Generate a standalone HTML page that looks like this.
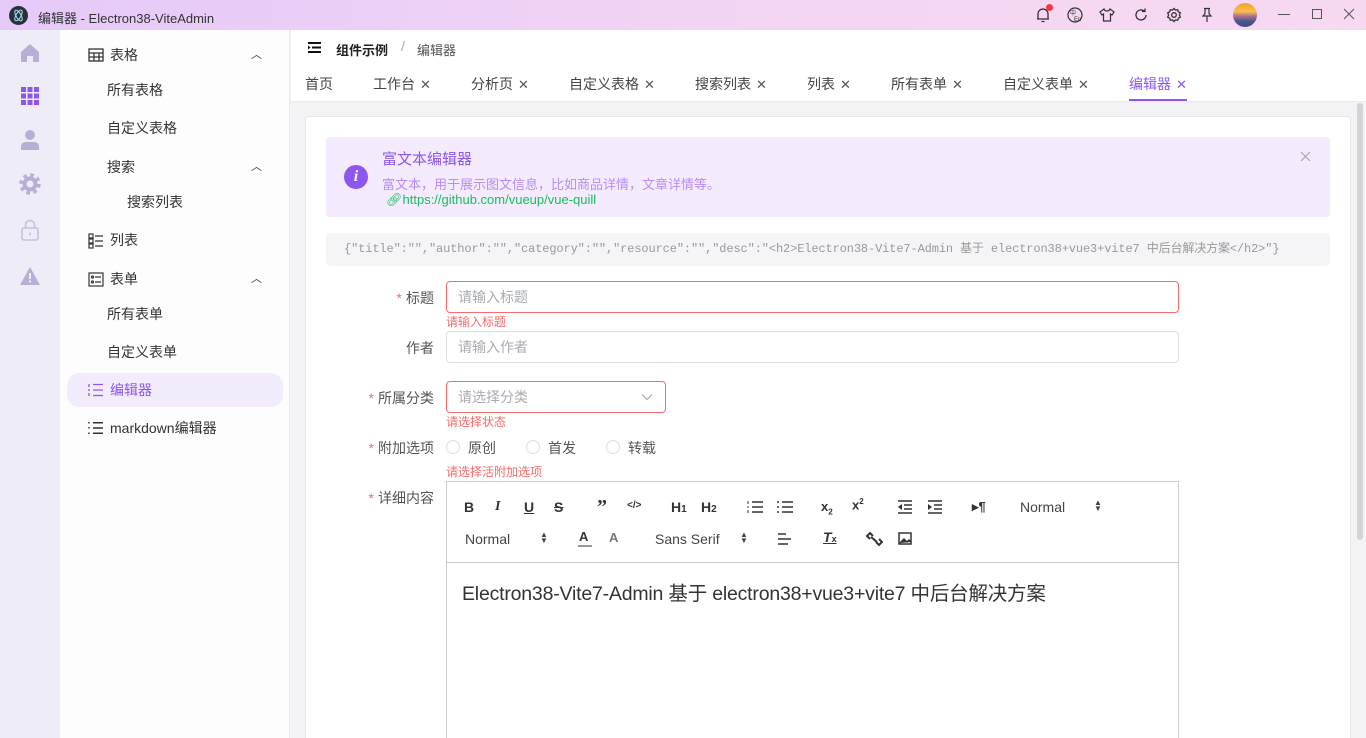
<!DOCTYPE html>
<html style="width:1366px;height:738px;overflow:hidden"><head><meta charset="utf-8"><style>
*{box-sizing:border-box;margin:0;padding:0}
body{width:1366px;height:738px;overflow:hidden;font-family:"Liberation Sans","Noto Sans CJK SC",sans-serif;font-size:14px;color:#333;background:#f3f3f6;position:relative}
.abs{position:absolute}
.title{left:0;top:0;width:1366px;height:30px;background:linear-gradient(90deg,#e5c9f9,#f4d6f3 60%,#f7d9f2)}
.rail{left:0;top:30px;width:60px;height:708px;background:#eeecf7}
.side{left:60px;top:30px;width:230px;height:708px;background:#fdfdfe;border-right:1px solid #e8e8ee}
.mi{position:absolute;left:0;width:230px;height:34px;line-height:34px;color:#333;font-size:14px}
.hdr{left:291px;top:30px;width:1075px;height:36px;background:#fff}
.tabs{left:291px;top:66px;width:1075px;height:36px;background:#fff;border-bottom:1px solid #ececf0}
.tab{position:absolute;top:0;line-height:36px;color:#444;font-size:14px}
.tab i{font-style:normal;color:#555;font-size:13px;margin-left:5px}
.card{left:305px;top:116px;width:1046px;height:622px;background:#fff;border:1px solid #e6e6ee;border-bottom:none;border-radius:4px 4px 0 0}
.lbl{position:absolute;right:932px;font-size:14px;color:#555;text-align:right}
.lbl b{color:#f56c6c;font-weight:normal;margin-right:4px}
.inp{position:absolute;left:446px;height:32px;border:1px solid #dcdfe6;border-radius:4px;padding-left:11px;line-height:30px;color:#a8abb2;font-size:14px;background:#fff}
.err{border-color:#f56c6c}
.em{position:absolute;left:446px;font-size:12px;color:#f56c6c}
.tb{position:absolute;font-size:13px;color:#333;font-weight:bold;white-space:nowrap}
</style></head><body>
<div class="abs title">
  <div class="abs" style="left:9px;top:6px;width:19px;height:19px;border-radius:50%;background:#2b2f3a"><svg width="19" height="19" viewBox="0 0 19 19"><g fill="none" stroke="#9fe3f2" stroke-width="1"><ellipse cx="9.5" cy="9.5" rx="6" ry="2.5" transform="rotate(60 9.5 9.5)"/><ellipse cx="9.5" cy="9.5" rx="6" ry="2.5" transform="rotate(-60 9.5 9.5)"/></g></svg></div>
  <div class="abs" style="left:38px;top:8px;font-size:13px;color:#333">编辑器 - Electron38-ViteAdmin</div>
  <svg class="abs" style="left:1034px;top:6px" width="18" height="18" viewBox="0 0 18 18" fill="none" stroke="#333" stroke-width="1.3"><path d="M4 13V8a5 5 0 0 1 10 0v5zM3 13h12M7.5 15.5h3"/></svg>
  <div class="abs" style="left:1046px;top:4px;width:7px;height:7px;border-radius:50%;background:#f5363d"></div>
  <svg class="abs" style="left:1066px;top:6px" width="18" height="18" viewBox="0 0 18 18" fill="none" stroke="#333" stroke-width="1.2"><circle cx="9" cy="9" r="7"/><text x="4" y="9" font-size="6" fill="#333" stroke="none">中</text><text x="8" y="15" font-size="6" fill="#333" stroke="none">En</text></svg>
  <svg class="abs" style="left:1098px;top:6px" width="18" height="18" viewBox="0 0 18 18" fill="none" stroke="#333" stroke-width="1.2"><path d="M6 3L2 6l2 3 1.5-1V15h7V8L14 9l2-3-4-3c-.5 1.5-1.5 2-3 2S6.5 4.5 6 3z"/></svg>
  <svg class="abs" style="left:1132px;top:6px" width="18" height="18" viewBox="0 0 18 18" fill="none" stroke="#333" stroke-width="1.3"><path d="M14 9a5 5 0 1 1-1.5-3.6M13 2.5v3h-3"/></svg>
  <svg class="abs" style="left:1165px;top:6px" width="18" height="18" viewBox="0 0 18 18" fill="none" stroke="#333" stroke-width="1.3"><circle cx="9" cy="9" r="2.3"/><path d="M9 2.5l1.5 1.6 2.2-.4.6 2.1 2 1-.9 2.2.9 2.2-2 1-.6 2.1-2.2-.4L9 15.5l-1.5-1.6-2.2.4-.6-2.1-2-1 .9-2.2-.9-2.2 2-1 .6-2.1 2.2.4z"/></svg>
  <svg class="abs" style="left:1198px;top:6px" width="18" height="18" viewBox="0 0 18 18" fill="none" stroke="#333" stroke-width="1.2"><path d="M6 2.5h6M7 2.5v5L5 10h8l-2-2.5v-5M9 10v6"/></svg>
  <div class="abs" style="left:1233px;top:3px;width:24px;height:24px;border-radius:50%;background:linear-gradient(180deg,#f0a12e 0%,#f9c04a 35%,#b0708a 55%,#4a5a8e 75%,#3e4d7e 100%)"></div>
  <div class="abs" style="left:1278px;top:14px;width:12px;height:1px;background:#555"></div>
  <div class="abs" style="left:1312px;top:9px;width:10px;height:10px;border:1px solid #555"></div>
  <svg class="abs" style="left:1343px;top:8px" width="12" height="12" viewBox="0 0 12 12" stroke="#555" stroke-width="1"><path d="M1 1l10 10M11 1L1 11"/></svg>
</div>

<div class="abs rail">
  <svg class="abs" style="left:20px;top:13px" width="20" height="19" viewBox="0 0 20 19" fill="#b9afd6"><path d="M10 1L1 9v10h6v-6h6v6h6V9z"/></svg>
  <svg class="abs" style="left:21px;top:57px" width="18" height="18" viewBox="0 0 18 18" fill="#8d57ef"><rect x="0" y="0" width="5" height="5"/><rect x="6.5" y="0" width="5" height="5"/><rect x="13" y="0" width="5" height="5"/><rect x="0" y="6.5" width="5" height="5"/><rect x="6.5" y="6.5" width="5" height="5"/><rect x="13" y="6.5" width="5" height="5"/><rect x="0" y="13" width="5" height="5"/><rect x="6.5" y="13" width="5" height="5"/><rect x="13" y="13" width="5" height="5"/></svg>
  <svg class="abs" style="left:20px;top:99px" width="20" height="21" viewBox="0 0 20 21" fill="#b9afd6"><circle cx="10" cy="6" r="5"/><path d="M1 21v-4c0-2 2-4 5-4h8c3 0 5 2 5 4v4z"/></svg>
  <svg class="abs" style="left:19px;top:143px" width="22" height="22" viewBox="0 0 22 22" fill="none" stroke="#b9afd6"><circle cx="11" cy="11" r="9" stroke-width="3.5" stroke-dasharray="3.5 3.57"/><circle cx="11" cy="11" r="5.5" stroke-width="4"/></svg>
  <svg class="abs" style="left:20px;top:189px" width="20" height="22" viewBox="0 0 20 22" fill="none" stroke="#c9c0e0" stroke-width="1.6"><rect x="2" y="9" width="16" height="12" rx="2"/><path d="M5.5 9V6a4.5 4.5 0 0 1 9 0v3M10 13.5v3"/></svg>
  <svg class="abs" style="left:20px;top:237px" width="20" height="18" viewBox="0 0 20 18" fill="#b9afd6"><path d="M10 0L0 18h20z"/><rect x="9" y="6" width="2" height="6" fill="#eeecf7"/><rect x="9" y="13.5" width="2" height="2" fill="#eeecf7"/></svg>
</div>

<div class="abs side">
  <div class="mi" style="top:8px"><svg class="abs" style="left:28px;top:10px" width="16" height="14" viewBox="0 0 16 14" fill="none" stroke="#333" stroke-width="1.3"><rect x="1" y="1" width="14" height="12"/><path d="M1 5h14M1 9h14M6 5v8M11 5v8"/></svg><span style="margin-left:50px">表格</span><span class="abs" style="right:28px;top:0;font-size:11px">︿</span></div>
  <div class="mi" style="top:43px;padding-left:47px">所有表格</div>
  <div class="mi" style="top:81px;padding-left:47px">自定义表格</div>
  <div class="mi" style="top:120px;padding-left:47px">搜索<span class="abs" style="right:28px;top:0;font-size:11px">︿</span></div>
  <div class="mi" style="top:155px;padding-left:67px">搜索列表</div>
  <div class="mi" style="top:193px"><svg class="abs" style="left:28px;top:10px" width="16" height="16" viewBox="0 0 16 16" fill="none" stroke="#333" stroke-width="1.2"><rect x="1" y="1" width="4" height="4"/><rect x="1" y="6" width="4" height="4"/><rect x="1" y="11" width="4" height="4"/><path d="M7 3h8M7 8h8M7 13h8"/></svg><span style="margin-left:50px">列表</span></div>
  <div class="mi" style="top:232px"><svg class="abs" style="left:28px;top:10px" width="16" height="15" viewBox="0 0 16 15" fill="none" stroke="#333" stroke-width="1.2"><rect x="1" y="1" width="14" height="13"/><circle cx="4.5" cy="5" r="1"/><circle cx="4.5" cy="10" r="1"/><path d="M7 5h6M7 10h6"/></svg><span style="margin-left:50px">表单</span><span class="abs" style="right:28px;top:0;font-size:11px">︿</span></div>
  <div class="mi" style="top:267px;padding-left:47px">所有表单</div>
  <div class="mi" style="top:305px;padding-left:47px">自定义表单</div>
  <div class="abs" style="left:7px;top:343px;width:216px;height:34px;border-radius:12px;background:#f2ecfd"></div>
  <div class="mi" style="top:343px;color:#8d57ef"><svg class="abs" style="left:28px;top:10px" width="16" height="14" viewBox="0 0 16 14" fill="none" stroke="#8d57ef" stroke-width="1.3"><path d="M1 1v3M1 6v2M1 10v3M5 1.5h10M5 7h10M5 12.5h10"/></svg><span style="margin-left:50px">编辑器</span></div>
  <div class="mi" style="top:381px"><svg class="abs" style="left:28px;top:10px" width="16" height="14" viewBox="0 0 16 14" fill="none" stroke="#333" stroke-width="1.5"><path d="M1 1v1.5M1 6v1.5M1 11.5v1.5M5 1.7h10M5 7h10M5 12.3h10"/></svg><span style="margin-left:50px">markdown编辑器</span></div>
</div>

<div class="abs hdr">
  <svg class="abs" style="left:17px;top:12px" width="13" height="11" viewBox="0 0 13 11" fill="#111"><rect x="0" y="0" width="13" height="2"/><rect x="4" y="4.5" width="9" height="2"/><rect x="0" y="9" width="13" height="2"/><path d="M0 3.5l2.5 2-2.5 2z"/></svg>
  <div class="abs" style="left:45px;top:10px;font-size:13px;font-weight:bold;color:#222">组件示例</div>
  <div class="abs" style="left:110px;top:8px;font-size:14px;color:#aaa">/</div>
  <div class="abs" style="left:126px;top:10px;font-size:13px;color:#555">编辑器</div>
</div>
<div class="abs tabs">
  <div class="tab" style="left:14px">首页</div>
  <div class="tab" style="left:82px">工作台<i>✕</i></div>
  <div class="tab" style="left:180px">分析页<i>✕</i></div>
  <div class="tab" style="left:278px">自定义表格<i>✕</i></div>
  <div class="tab" style="left:404px">搜索列表<i>✕</i></div>
  <div class="tab" style="left:516px">列表<i>✕</i></div>
  <div class="tab" style="left:600px">所有表单<i>✕</i></div>
  <div class="tab" style="left:712px">自定义表单<i>✕</i></div>
  <div class="tab" style="left:838px;color:#8d57ef">编辑器<i style="color:#8d57ef">✕</i></div>
  <div class="abs" style="left:838px;top:33px;width:58px;height:2px;background:#8d57ef"></div>
</div>
<div class="abs" style="left:1357px;top:103px;width:6px;height:437px;border-radius:3px;background:#d4d4d8"></div>

<div class="abs card"></div>
<div class="abs" style="left:326px;top:137px;width:1004px;height:80px;background:#f4ebfe;border-radius:4px">
  <div class="abs" style="left:18px;top:28px;width:24px;height:24px;border-radius:50%;background:#8d57ef;color:#fff;text-align:center;font:italic bold 16px/24px 'Liberation Serif',serif">i</div>
  <div class="abs" style="left:56px;top:11px;font-size:15px;color:#8d57ef">富文本编辑器</div>
  <div class="abs" style="left:56px;top:37px;font-size:13px;color:#b88df6;font-family:'Noto Sans CJK SC',sans-serif">富文本，用于展示图文信息，比如商品详情，文章详情等。</div>
  <div class="abs" style="left:60px;top:55px;font-size:13px;color:#13c25a">🔗︎https://github.com/vueup/vue-quill</div>
  <svg class="abs" style="left:974px;top:14px" width="11" height="11" viewBox="0 0 11 11" stroke="#a8a8b0" stroke-width="1.2"><path d="M1 1l9 9M10 1L1 10"/></svg>
</div>
<div class="abs" style="left:326px;top:233px;width:1004px;height:33px;background:#f5f5f7;border-radius:4px;padding-left:18px;line-height:33px;font-family:'Liberation Mono','Noto Sans CJK SC',monospace;font-size:12px;color:#999;white-space:nowrap;letter-spacing:-0.12px">{"title":"","author":"","category":"","resource":"","desc":"&lt;h2&gt;Electron38-Vite7-Admin 基于 electron38+vue3+vite7 中后台解决方案&lt;/h2&gt;"}</div>

<div class="lbl" style="top:288px"><b>*</b>标题</div>
<div class="inp err" style="top:281px;width:733px">请输入标题</div>
<div class="em" style="top:313px">请输入标题</div>
<div class="lbl" style="top:338px">作者</div>
<div class="inp" style="top:331px;width:733px">请输入作者</div>
<div class="lbl" style="top:388px"><b>*</b>所属分类</div>
<div class="inp err" style="top:381px;width:220px">请选择分类<svg class="abs" style="left:194px;top:11px" width="12" height="8" viewBox="0 0 12 8" fill="none" stroke="#a8abb2" stroke-width="1.2"><path d="M1 1.5l5 5 5-5"/></svg></div>
<div class="em" style="top:413px">请选择状态</div>
<div class="lbl" style="top:438px"><b>*</b>附加选项</div>
<div class="abs" style="left:446px;top:440px;width:14px;height:14px;border:1px solid #dcdfe6;border-radius:50%"></div>
<div class="abs" style="left:468px;top:438px;color:#555">原创</div>
<div class="abs" style="left:526px;top:440px;width:14px;height:14px;border:1px solid #dcdfe6;border-radius:50%"></div>
<div class="abs" style="left:548px;top:438px;color:#555">首发</div>
<div class="abs" style="left:606px;top:440px;width:14px;height:14px;border:1px solid #dcdfe6;border-radius:50%"></div>
<div class="abs" style="left:628px;top:438px;color:#555">转载</div>
<div class="em" style="top:463px">请选择活附加选项</div>
<div class="lbl" style="top:488px"><b>*</b>详细内容</div>

<div class="abs" style="left:446px;top:481px;width:733px;height:257px;border:1px solid #ccc;border-bottom:none;background:#fff"></div>
<div class="abs" style="left:446px;top:562px;width:733px;height:1px;background:#ccc"></div>
<div style="position:absolute;left:0;top:0;font-family:'Liberation Sans',sans-serif">
  <div class="tb" style="left:464px;top:499px;font-size:14px">B</div>
  <div class="tb" style="left:495px;top:499px;font-size:14px;font-style:italic;font-family:'Liberation Serif',serif">I</div>
  <div class="tb" style="left:524px;top:499px;font-size:14px;text-decoration:underline">U</div>
  <div class="tb" style="left:554px;top:499px;font-size:14px;text-decoration:line-through">S</div>
  <div class="tb" style="left:597px;top:496px;font-size:20px;font-family:'Liberation Serif',serif">”</div>
  <div class="tb" style="left:627px;top:500px;font-size:10px">&lt;/&gt;</div>
  <div class="tb" style="left:671px;top:499px;font-size:14px">H<span style="font-size:10px">1</span></div>
  <div class="tb" style="left:701px;top:499px;font-size:14px">H<span style="font-size:10px">2</span></div>
  <svg class="abs" style="left:747px;top:500px" width="16" height="14" viewBox="0 0 16 14" stroke="#333" stroke-width="1.6"><path d="M5 2h11M5 7h11M5 12h11"/><path d="M1 1v3M1 6v2M1 10v3" stroke-width="1"/></svg>
  <svg class="abs" style="left:777px;top:500px" width="16" height="14" viewBox="0 0 16 14" stroke="#333" stroke-width="1.6"><path d="M5 2h11M5 7h11M5 12h11M0 2h2M0 7h2M0 12h2"/></svg>
  <div class="tb" style="left:821px;top:499px;font-size:13px">x<sub style="font-size:8px">2</sub></div>
  <div class="tb" style="left:852px;top:497px;font-size:13px">x<sup style="font-size:8px">2</sup></div>
  <svg class="abs" style="left:897px;top:500px" width="16" height="14" viewBox="0 0 16 14" stroke="#333" stroke-width="1.6"><path d="M1 1h14M7 5h8M7 9h8M1 13h14"/><path d="M5 4L1 7l4 3z" fill="#333" stroke="none"/></svg>
  <svg class="abs" style="left:927px;top:500px" width="16" height="14" viewBox="0 0 16 14" stroke="#333" stroke-width="1.6"><path d="M1 1h14M7 5h8M7 9h8M1 13h14"/><path d="M1 4l4 3-4 3z" fill="#333" stroke="none"/></svg>
  <div class="tb" style="left:972px;top:499px;font-size:13px">▸¶</div>
  <div class="abs" style="left:1020px;top:499px;font-size:14px;color:#444">Normal</div>
  <div class="abs" style="left:1094px;top:500px;font-size:8px;line-height:6px;color:#444">▲<br>▼</div>
  <div class="abs" style="left:465px;top:531px;font-size:14px;color:#444">Normal</div>
  <div class="abs" style="left:540px;top:532px;font-size:8px;line-height:6px;color:#444">▲<br>▼</div>
  <div class="tb" style="left:579px;top:529px;font-size:13px">A</div>
  <div class="abs" style="left:578px;top:545px;width:14px;height:2px;background:#999"></div>
  <div class="tb" style="left:609px;top:530px;font-size:13px;color:#777">A</div>
  <div class="abs" style="left:655px;top:531px;font-size:14px;color:#444;white-space:nowrap">Sans Serif</div>
  <div class="abs" style="left:740px;top:532px;font-size:8px;line-height:6px;color:#444">▲<br>▼</div>
  <svg class="abs" style="left:777px;top:532px" width="16" height="14" viewBox="0 0 16 14" stroke="#333" stroke-width="1.6"><path d="M1 2h8M1 7h13M1 12h10"/></svg>
  <div class="tb" style="left:823px;top:529px;font-size:14px;font-style:italic;text-decoration:underline">T<span style="font-size:9px;font-style:normal">x</span></div>
  <svg class="abs" style="left:866px;top:531px" width="17" height="16" viewBox="0 0 17 16" fill="none" stroke="#333" stroke-width="2"><path d="M7 5L4 2 1 5l3 3M10 11l3 3 3-3-3-3M5 6l6 5"/></svg>
  <svg class="abs" style="left:898px;top:532px" width="14" height="13" viewBox="0 0 14 13" fill="none" stroke="#333" stroke-width="1.5"><rect x="1" y="1" width="12" height="11"/><path d="M2 11l4-4 3 3 2-2 2 2" fill="#333"/></svg>
</div>
<div class="abs" style="left:462px;top:577px;font-size:19.5px;color:#333;letter-spacing:-0.2px;white-space:nowrap">Electron38-Vite7-Admin 基于 electron38+vue3+vite7 中后台解决方案</div>
</body></html>
